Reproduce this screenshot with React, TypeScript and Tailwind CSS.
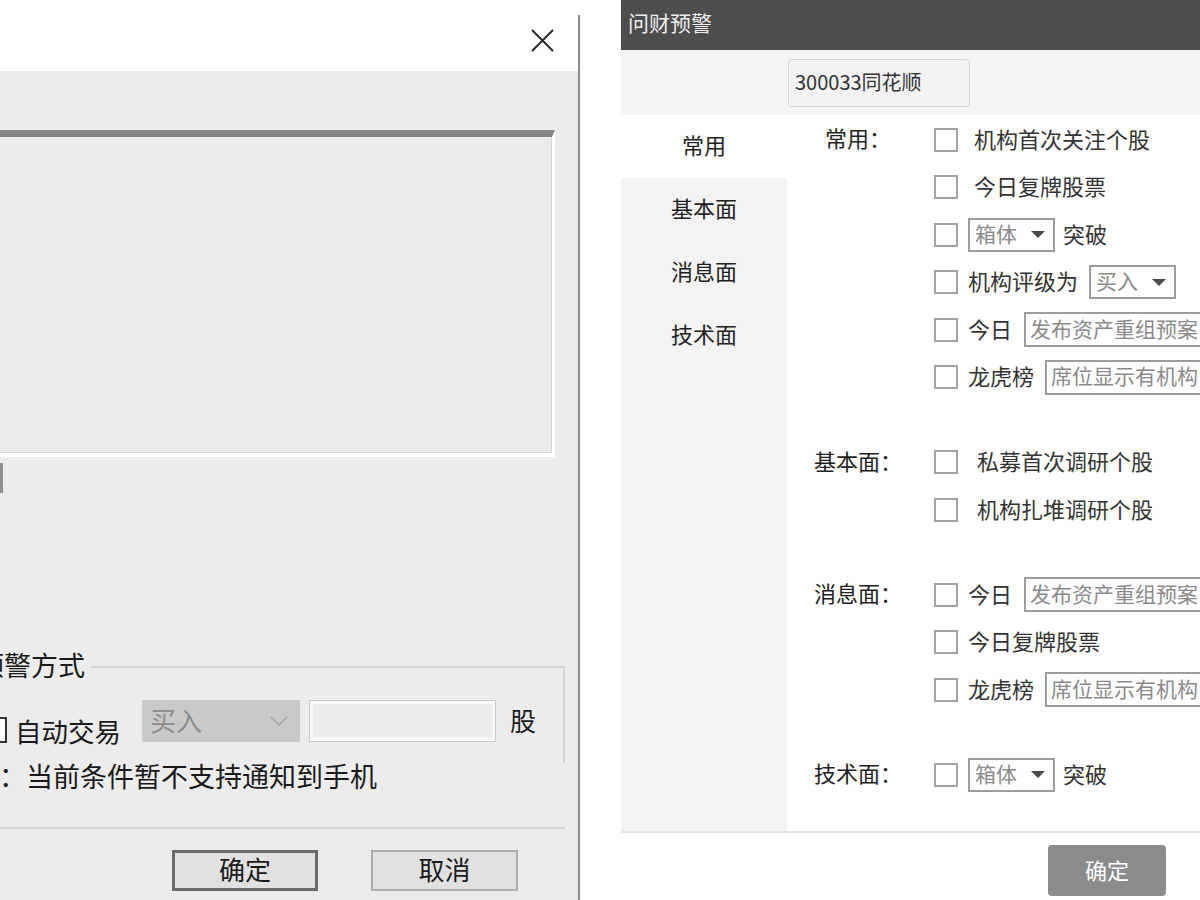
const cjk = "font-['Noto_Sans_CJK_SC','Noto_Sans',sans-serif]";

const Check: React.FC = () => (
  <div className="h-[24px] w-[24px] shrink-0 border-2 border-[#a3a3a3] bg-white" />
);

const Arrow: React.FC = () => (
  <svg width="16" height="9" viewBox="0 0 16 9" className="shrink-0">
    <polygon points="1,1 15,1 8,8" fill="#4a4a4a" />
  </svg>
);

interface DropProps {
  text: string;
  arrow?: boolean;
  wide?: boolean;
}

const Drop: React.FC<DropProps> = ({ text, arrow = true, wide = false }) => (
  <div
    className={
      wide
        ? "flex h-[35px] w-[260px] shrink-0 items-center border-2 border-[#9d9d9d] bg-white pl-[4px]"
        : "flex h-[34px] w-[87px] shrink-0 items-center justify-between border-2 border-[#9d9d9d] bg-white pl-[5px] pr-[7px]"
    }
  >
    <span className="mb-[3px] text-[21px] leading-none text-[#8a8a8a]">{text}</span>
    {arrow && <Arrow />}
  </div>
);

const Row: React.FC<{ children: React.ReactNode }> = ({ children }) => (
  <div className="flex h-[47.5px] items-center whitespace-nowrap text-[22px] leading-none text-[#333] [&>span]:mb-[4px]">
    <Check />
    {children}
  </div>
);

const Group: React.FC<{ label: string; children: React.ReactNode }> = ({ label, children }) => (
  <div className="flex">
    <div className="flex h-[47.5px] w-[136px] shrink-0 items-center justify-center pb-[5px] text-[22px] leading-none text-[#222]">
      {label}
    </div>
    <div className="ml-[8px] flex flex-col">{children}</div>
  </div>
);

const LeftDialog: React.FC = () => (
  <div className="flex w-[580px] shrink-0 flex-col pt-[15px]">
    <div className="flex flex-1 flex-col overflow-hidden border-r-2 border-[#8c8c8c]">
      <div className="flex h-[56px] shrink-0 justify-end bg-white pr-[24px] pt-[14px]">
        <svg width="23" height="23" viewBox="0 0 23 23">
          <path d="M1 1 L22 22 M22 1 L1 22" stroke="#2a2a2a" strokeWidth="2" />
        </svg>
      </div>
      <div className="flex flex-1 flex-col bg-[#ececec] text-[#1a1a1a]">
        <div className="ml-[-10px] mr-[23px] mt-[59px] h-[327px] shrink-0 border-t-[7px] border-r-[3px] border-b-[4px] border-t-[#858585] border-r-white border-b-white">
          <div className="h-full border-r border-b border-[#d2d2d2]" />
        </div>
        <div className="mt-[6px] h-[30px] w-[3px] shrink-0 bg-[#8d8d8d]" />

        <div className="mr-[13px] mt-[160px] flex h-[26px] shrink-0">
          <span className="ml-[-23px] mt-[-2px] whitespace-nowrap text-[27px] leading-[27px]">预警方式</span>
          <div className="ml-[6px] mt-[13px] flex-1 border-t-2 border-r-2 border-[#d3d3d3]" />
        </div>
        <div className="mr-[13px] flex h-[84px] shrink-0 items-center whitespace-nowrap border-r-2 border-[#d3d3d3]">
          <span className="ml-[-19px] mt-[18px] h-[26px] w-[26px] shrink-0 border-2 border-[#333] bg-white" />
          <span className="ml-[8px] mt-[20px] text-[26.5px] leading-[26px]">自动交易</span>
          <div className="ml-[21px] flex h-[42px] w-[158px] shrink-0 items-center justify-between bg-[#c9c9c9] pl-[8px] pr-[12px]">
            <span className="mb-[3px] text-[26px] leading-none text-[#8c8c8c]">买入</span>
            <svg width="18" height="10" viewBox="0 0 18 10">
              <polyline points="1,1 9,9 17,1" fill="none" stroke="#a3a3a3" strokeWidth="1.5" />
            </svg>
          </div>
          <div className="ml-[10px] h-[40px] w-[185px] shrink-0 border-[3px] border-[#f8f8f8] ring-1 ring-[#c8c8c8]" />
          <span className="mb-[3px] ml-[15px] text-[26px] leading-none">股</span>
        </div>
        <div className="flex h-[27px] shrink-0 items-center whitespace-nowrap">
          <span className="mb-[3px] ml-[-1px] text-[27px] leading-none">：当前条件暂不支持通知到手机</span>
        </div>
        <div className="mr-[13px] mt-[37px] h-[2px] shrink-0 bg-[#d3d3d3]" />
        <div className="mt-[21px] flex shrink-0 gap-[53px] pl-[172px]">
          <button className="flex h-[41px] w-[146px] items-center justify-center border-[3px] border-[#6b6b6b] bg-[#e1e1e1] pb-[4px] text-[26px] leading-none">
            确定
          </button>
          <button className="flex h-[41px] w-[147px] items-center justify-center border-2 border-[#adadad] bg-[#e1e1e1] pb-[4px] text-[26px] leading-none">
            取消
          </button>
        </div>
      </div>
    </div>
  </div>
);

const tabs = ["常用", "基本面", "消息面", "技术面"];

const RightDialog: React.FC = () => (
  <div className="ml-[41px] flex w-[579px] shrink-0 flex-col overflow-hidden bg-white">
    <div className="flex h-[50px] shrink-0 items-center bg-[#4d4d4d] pb-[5px] pl-[7px] text-[21px] leading-none text-[#eeeeee]">
      问财预警
    </div>
    <div className="h-[65px] shrink-0 bg-[#f4f4f4] pl-[167px] pt-[9px]">
      <div className="flex h-[48px] w-[182px] items-center rounded-[3px] border border-[#d3d3d3] bg-[#f2f2f2] pb-[3px] pl-[6px] text-[20px] leading-none text-[#333]">
        300033同花顺
      </div>
    </div>
    <div className="flex h-[716px] shrink-0">
      <div className="flex w-[166px] shrink-0 flex-col bg-[#f3f3f3]">
        {tabs.map((t, i) => (
          <div
            key={t}
            className={
              i === 0
                ? "flex h-[63px] items-center justify-center bg-white pb-[5px] text-[22px] leading-none text-[#222]"
                : "flex h-[63px] items-center justify-center pb-[5px] text-[22px] leading-none text-[#222]"
            }
          >
            {t}
          </div>
        ))}
      </div>
      <div className="flex flex-1 flex-col gap-[37.5px] pl-[3px] pt-[1px]">
        <Group label="常用：">
          <Row>
            <span className="ml-[16px]">机构首次关注个股</span>
          </Row>
          <Row>
            <span className="ml-[16px]">今日复牌股票</span>
          </Row>
          <Row>
            <span className="ml-[10px]" />
            <Drop text="箱体" />
            <span className="ml-[8px]">突破</span>
          </Row>
          <Row>
            <span className="ml-[10px]">机构评级为</span>
            <span className="ml-[11px]" />
            <Drop text="买入" />
          </Row>
          <Row>
            <span className="ml-[10px]">今日</span>
            <span className="ml-[12px]" />
            <Drop text="发布资产重组预案" arrow={false} wide />
          </Row>
          <Row>
            <span className="ml-[10px]">龙虎榜</span>
            <span className="ml-[11px]" />
            <Drop text="席位显示有机构" arrow={false} wide />
          </Row>
        </Group>
        <Group label="基本面：">
          <Row>
            <span className="ml-[19px]">私募首次调研个股</span>
          </Row>
          <Row>
            <span className="ml-[19px]">机构扎堆调研个股</span>
          </Row>
        </Group>
        <Group label="消息面：">
          <Row>
            <span className="ml-[10px]">今日</span>
            <span className="ml-[12px]" />
            <Drop text="发布资产重组预案" arrow={false} wide />
          </Row>
          <Row>
            <span className="ml-[10px]">今日复牌股票</span>
          </Row>
          <Row>
            <span className="ml-[10px]">龙虎榜</span>
            <span className="ml-[11px]" />
            <Drop text="席位显示有机构" arrow={false} wide />
          </Row>
        </Group>
        <Group label="技术面：">
          <Row>
            <span className="ml-[10px]" />
            <Drop text="箱体" />
            <span className="ml-[8px]">突破</span>
          </Row>
        </Group>
      </div>
    </div>
    <div className="h-[2px] shrink-0 bg-[#e3e3e3]" />
    <div className="flex-1 pl-[427px] pt-[12px]">
      <button className="flex h-[51px] w-[118px] items-center justify-center rounded-[4px] bg-[#8b8b8b] pb-[3px] text-[22px] leading-none text-white">
        确定
      </button>
    </div>
  </div>
);

const App: React.FC = () => {
  return (
    <div className={`flex h-[900px] w-[1200px] overflow-hidden bg-white ${cjk}`}>
      <LeftDialog />
      <RightDialog />
    </div>
  );
};

export default App;
